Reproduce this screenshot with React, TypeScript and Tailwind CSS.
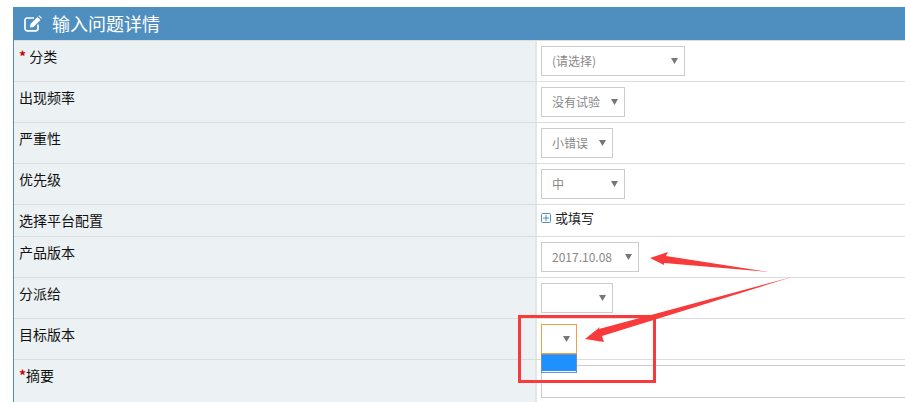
import type { ReactNode } from "react";

const Caret = () => (
	<svg width="7" height="6" viewBox="0 0 7 6" className="shrink-0">
		<path d="M0 0H7L3.5 6Z" fill="#777777" />
	</svg>
);

const FakeSelect = ({ text, width }: { text?: string; width: string }) => (
	<div
		className={`h-[30px] ${width} border border-[#cccccc] bg-white pl-[10px] pr-[6px] flex items-center justify-between text-[12px] text-[#888888]`}
	>
		<span>{text}</span>
		<Caret />
	</div>
);

const Row = ({
	label,
	height,
	children,
}: {
	label: ReactNode;
	height: string;
	children: ReactNode;
}) => (
	<div className={`flex ${height} border-b border-[#dddddd]`}>
		<div className="w-[521px] shrink-0 bg-[#ecf1f4] pl-[5px] pt-[5px] text-[14px] leading-[20px] text-[#111111]">
			{label}
		</div>
		<div className="flex-1 border-l-2 border-[#e2e6e8] pl-[4px] pt-[5px]">
			{children}
		</div>
	</div>
);

const Star = () => <span className="text-[#cc0000] font-bold">*</span>;

export default function App() {
	return (
		<div
			className="relative w-[905px] h-[402px] overflow-hidden bg-white pt-[7px] pl-[13px]"
			style={{ fontFamily: '"Noto Sans CJK SC", "Liberation Sans", sans-serif' }}
		>
			<div className="w-[892px] border-l border-[#4f8fbf]">
				<div className="h-[33px] bg-[#4f8fbf] text-white flex items-center pl-[10px] gap-[10px] text-[18px]">
					<svg width="18" height="17" viewBox="0 0 18 17" fill="none">
						<path
							d="M14 9.5V13.5C14 14.9 13 15.8 11.7 15.8H3.3C2 15.8 1 14.9 1 13.5V5.3C1 4 2 3 3.3 3H10"
							stroke="white"
							strokeWidth="1.7"
						/>
						<path d="M6 12.5L6.5 9L13.5 2L16.5 5L9.5 12Z" fill="white" />
						<path d="M14.5 1L15.5 0.5L17.8 2.8L17.3 3.8Z" fill="white" />
					</svg>
					<span>输入问题详情</span>
				</div>
				<div className="border-t border-[#dddddd]">
					<Row
						height="h-[41px]"
						label={
							<>
								<Star /> 分类
							</>
						}
					>
						<FakeSelect text="(请选择)" width="w-[144px]" />
					</Row>
					<Row height="h-[41px]" label="出现频率">
						<FakeSelect text="没有试验" width="w-[84px]" />
					</Row>
					<Row height="h-[41px]" label="严重性">
						<FakeSelect text="小错误" width="w-[72px]" />
					</Row>
					<Row height="h-[41px]" label="优先级">
						<FakeSelect text="中" width="w-[84px]" />
					</Row>
					<Row height="h-[32px]" label="选择平台配置">
						<div className="flex items-center gap-[4px] h-[20px] -mt-[2px] text-[13px] text-[#222222]">
							<svg width="10" height="10" viewBox="0 0 10 10">
								<rect x="0.5" y="0.5" width="9" height="9" rx="1" fill="none" stroke="#4f8fbf" />
								<path d="M5 2V8M2 5H8" stroke="#4f8fbf" />
							</svg>
							<span>或填写</span>
						</div>
					</Row>
					<Row height="h-[41px]" label="产品版本">
						<FakeSelect text="2017.10.08" width="w-[98px]" />
					</Row>
					<Row height="h-[41px]" label="分派给">
						<FakeSelect width="w-[72px]" />
					</Row>
					<Row height="h-[41px]" label="目标版本">
						<div className="relative w-[36px] h-[30px] border border-[#f0a040] bg-white flex items-center justify-end pr-[6px]">
							<Caret />
							<div className="absolute left-[-1px] top-[29px] w-[36px] h-[19px] border border-[#6f8fc8] bg-white pb-[1px]">
								<div className="h-full bg-[#1e90ff]" />
							</div>
						</div>
					</Row>
					<Row
						height="h-[60px]"
						label={
							<>
								<Star />
								摘要
							</>
						}
					>
						<div className="w-[400px] h-[33px] border border-[#cccccc] bg-white" />
					</Row>
				</div>
			</div>

			<div className="absolute left-[518px] top-[315px] w-[138px] h-[68px] border-[3px] border-[#f83a3a]" />
			<svg className="absolute left-0 top-0" width="905" height="402" viewBox="0 0 905 402" fill="#f83a3a">
				<path d="M650 258L668 252L666 256L769 272L664 263L664 265Z" />
				<path d="M792 277L599 329L600 327L585 339L604 342L602 336Z" />
			</svg>
		</div>
	);
}
